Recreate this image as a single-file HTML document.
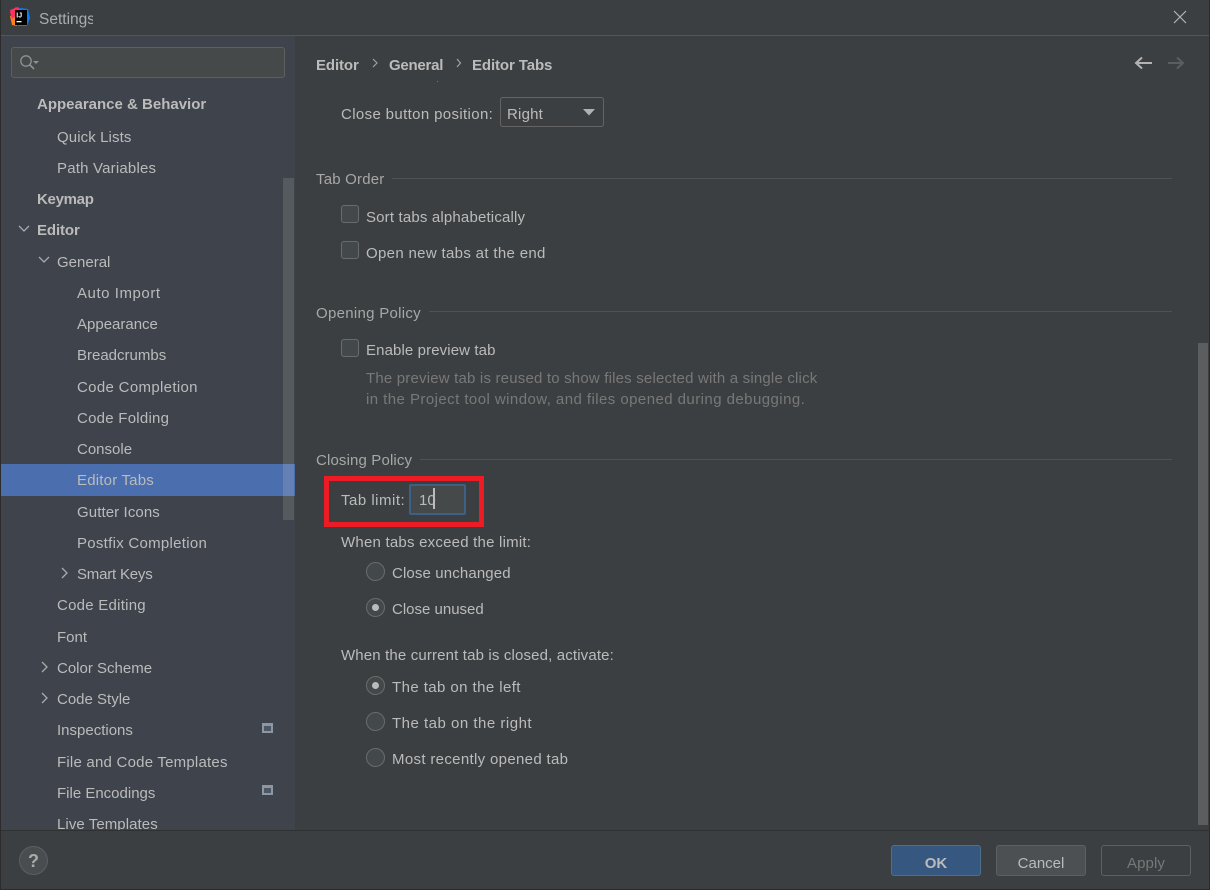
<!DOCTYPE html>
<html><head><meta charset="utf-8"><style>
html,body{margin:0;padding:0;width:1210px;height:890px;overflow:hidden;background:#3c3f41}
body{position:relative;font-family:"Liberation Sans",sans-serif;font-size:15px;color:#bbbbbb}
.t{position:absolute;white-space:nowrap;line-height:20px;height:20px;margin-top:1px}
.b{font-weight:bold}
.box{position:absolute;box-sizing:border-box}
.cb{position:absolute;box-sizing:border-box;width:18px;height:18px;left:341px;border:1px solid #6b6b6b;border-radius:3px;background:#43494a}
.rb{position:absolute;box-sizing:border-box;width:19px;height:19px;left:366px;border:1px solid #6b6b6b;border-radius:50%;background:#43494a}
.rb.on::after{content:"";position:absolute;left:5px;top:5px;width:7px;height:7px;border-radius:50%;background:#bbb}
.sep{position:absolute;height:1px;background:#515151;right:38px}
svg{position:absolute;overflow:visible}
</style></head><body>
<div class="box" style="left:0;top:0;width:1210px;height:890px;border:1px solid #2b2b2b;border-top:0;z-index:9;pointer-events:none"></div>
<div class="box" style="left:0;top:35px;width:1210px;height:1px;background:#555"></div>

<svg style="left:10px;top:7px" width="20" height="20" viewBox="0 0 20 20"><path d="M0 3L8 0L12 4L2 11Z" fill="#f5317f"/><path d="M0 9L6 7L7 19L2 18Z" fill="#fc801d"/><path d="M10 1L18 2L20 11L17 19L8 19Z" fill="#087cfa"/><path d="M0 5L6 0L9 6L2 12Z" fill="#fe315d"/><rect x="5" y="3" width="12" height="15" fill="#000"/><rect x="6.500" y="14" width="5" height="1.300" fill="#fff"/><text x="6.300" y="10.500" font-family="Liberation Sans" font-size="7" font-weight="bold" fill="#fff">IJ</text></svg>
<div class="t" style="left:39px;top:9px;width:54px;overflow:hidden;color:#a9adb0;font-size:15.5px">Settings</div>
<svg style="left:1173px;top:10px" width="14" height="14" viewBox="0 0 14 14"><path d="M1 1L13 13M13 1L1 13" stroke="#b5b5b5" stroke-width="1.2" fill="none"/></svg>

<div class="box" style="left:1px;top:36px;width:294px;height:794px;background:#3e434c;overflow:hidden">
 <div class="box" style="left:10px;top:11px;width:274px;height:31px;background:#45494a;border:1px solid #5e6060;border-radius:3px"></div>
 <svg style="left:18px;top:18px" width="22" height="18" viewBox="0 0 22 18"><circle cx="7" cy="7" r="5.2" fill="none" stroke="#8f9294" stroke-width="1.3"/><path d="M11 11L15 15" stroke="#8f9294" stroke-width="1.6"/><path d="M14 7H20L17 10Z" fill="#8f9294"/></svg>
 <div class="box" style="left:282px;top:142px;width:11px;height:342px;background:#555a5f"></div>
 <div class="box" style="left:0;top:428px;width:294px;height:32px;background:#4b6eaf"></div>
 <div class="box" style="left:282px;top:428px;width:11px;height:32px;background:#6580b5"></div>

 <div class="t b" style="left:36px;top:58px">Appearance &amp; Behavior</div>
 <div class="t" style="left:56px;top:91px;letter-spacing:.1px">Quick Lists</div>
 <div class="t" style="left:56px;top:122px;letter-spacing:.2px">Path Variables</div>
 <div class="t b" style="left:36px;top:153px;letter-spacing:-.3px">Keymap</div>
 <div class="t b" style="left:36px;top:184px;letter-spacing:-.1px">Editor</div>
 <div class="t" style="left:56px;top:216px">General</div>
 <div class="t" style="left:76px;top:247px;letter-spacing:.55px">Auto Import</div>
 <div class="t" style="left:76px;top:278px">Appearance</div>
 <div class="t" style="left:76px;top:309px">Breadcrumbs</div>
 <div class="t" style="left:76px;top:341px;letter-spacing:.33px">Code Completion</div>
 <div class="t" style="left:76px;top:372px;letter-spacing:.25px">Code Folding</div>
 <div class="t" style="left:76px;top:403px">Console</div>
 <div class="t" style="left:76px;top:434px;letter-spacing:.2px">Editor Tabs</div>
 <div class="t" style="left:76px;top:466px;letter-spacing:.1px">Gutter Icons</div>
 <div class="t" style="left:76px;top:497px;letter-spacing:.28px">Postfix Completion</div>
 <div class="t" style="left:76px;top:528px;letter-spacing:-.2px">Smart Keys</div>
 <div class="t" style="left:56px;top:559px;letter-spacing:.25px">Code Editing</div>
 <div class="t" style="left:56px;top:591px">Font</div>
 <div class="t" style="left:56px;top:622px">Color Scheme</div>
 <div class="t" style="left:56px;top:653px">Code Style</div>
 <div class="t" style="left:56px;top:684px">Inspections</div>
 <div class="t" style="left:56px;top:716px;letter-spacing:.22px">File and Code Templates</div>
 <div class="t" style="left:56px;top:747px">File Encodings</div>
 <div class="t" style="left:56px;top:778px;letter-spacing:.07px">Live Templates</div>

 <svg style="left:0;top:0" width="294" height="794" viewBox="0 0 294 794" fill="none" stroke="#a8abad" stroke-width="1.3">
  <path d="M18 190L23 195L28 190"/><path d="M38 221L43 226L48 221"/>
  <path d="M61 532L66 537L61 542"/><path d="M41 626L46 631L41 636"/><path d="M41 657L46 662L41 667"/>
  <g stroke="none"><rect x="261" y="687" width="11" height="10" fill="#8d97a3"/><rect x="263" y="690" width="7" height="5" fill="#4d5763"/><rect x="261" y="749" width="11" height="10" fill="#8d97a3"/><rect x="263" y="752" width="7" height="5" fill="#4d5763"/></g>
 </svg>
</div>

<div class="t b" style="left:316px;top:55px;letter-spacing:-.1px">Editor</div>
<div class="t b" style="left:389px;top:55px;letter-spacing:-.25px">General</div>
<div class="t b" style="left:472px;top:55px;letter-spacing:-.1px">Editor Tabs</div>
<svg style="left:370px;top:58px" width="100" height="12" viewBox="0 0 100 12" fill="none" stroke="#a0a0a0" stroke-width="1.2"><path d="M3 1L7 5L3 9"/><path d="M87 1L90.500 5L87 9"/></svg>
<svg style="left:1133px;top:55px" width="60" height="16" viewBox="0 0 60 16" fill="none" stroke-width="2"><path d="M19 8H3M9 2.500L3 8L9 13.500" stroke="#b3b3b3"/><path d="M35 8H50M44 2.500L50 8L44 13.500" stroke="#5b5e60"/></svg>
<div class="box" style="left:437px;top:81px;width:1px;height:1px;background:#777"></div>

<div class="t" style="left:341px;top:104px;letter-spacing:.36px">Close button position:</div>
<div class="box" style="left:500px;top:97px;width:104px;height:30px;border:1px solid #646464;border-radius:3px;background:#3c3f41"></div>
<div class="t" style="left:507px;top:104px;letter-spacing:.2px">Right</div>
<svg style="left:583px;top:109px" width="12" height="7"><path d="M0 0H12L6 6.500Z" fill="#afb1b3"/></svg>

<div class="t" style="left:316px;top:169px;color:#a7a7a7;letter-spacing:.2px">Tab Order</div>
<div class="sep" style="left:392px;top:178px"></div>
<div class="cb" style="top:205px"></div>
<div class="t" style="left:366px;top:207px;letter-spacing:.17px">Sort tabs alphabetically</div>
<div class="cb" style="top:241px"></div>
<div class="t" style="left:366px;top:243px;letter-spacing:.33px">Open new tabs at the end</div>

<div class="t" style="left:316px;top:303px;color:#a7a7a7;letter-spacing:.29px">Opening Policy</div>
<div class="sep" style="left:429px;top:311px"></div>
<div class="cb" style="top:339px"></div>
<div class="t" style="left:366px;top:340px;letter-spacing:.11px">Enable preview tab</div>
<div class="t" style="left:366px;top:368px;color:#787878;letter-spacing:.19px">The preview tab is reused to show files selected with a single click</div>
<div class="t" style="left:366px;top:389px;color:#787878;letter-spacing:.44px">in the Project tool window, and files opened during debugging.</div>

<div class="t" style="left:316px;top:450px;color:#a7a7a7;letter-spacing:.14px">Closing Policy</div>
<div class="sep" style="left:420px;top:459px"></div>
<div class="box" style="left:324px;top:476px;width:160px;height:51px;border:5px solid #ed1c24"></div>
<div class="t" style="left:341px;top:490px;letter-spacing:.5px">Tab limit:</div>
<div class="box" style="left:409px;top:484px;width:57px;height:31px;background:#45494a;border:2px solid #3d6185;border-radius:2px"></div>
<div class="t" style="left:419px;top:490px">10</div>
<div class="box" style="left:433px;top:488px;width:2px;height:21px;background:#bbb"></div>

<div class="t" style="left:341px;top:532px;letter-spacing:.22px">When tabs exceed the limit:</div>
<div class="rb" style="top:562px"></div>
<div class="t" style="left:392px;top:563px;letter-spacing:.13px">Close unchanged</div>
<div class="rb on" style="top:598px"></div>
<div class="t" style="left:392px;top:599px">Close unused</div>
<div class="t" style="left:341px;top:645px;letter-spacing:.15px">When the current tab is closed, activate:</div>
<div class="rb on" style="top:676px"></div>
<div class="t" style="left:392px;top:677px;letter-spacing:.42px">The tab on the left</div>
<div class="rb" style="top:712px"></div>
<div class="t" style="left:392px;top:713px;letter-spacing:.5px">The tab on the right</div>
<div class="rb" style="top:748px"></div>
<div class="t" style="left:392px;top:749px;letter-spacing:.33px">Most recently opened tab</div>

<div class="box" style="left:1198px;top:343px;width:10px;height:482px;background:#5b5d5f"></div>
<div class="box" style="left:0;top:830px;width:1210px;height:1px;background:#2f3132"></div>

<div class="box" style="left:19px;top:846px;width:29px;height:29px;border-radius:50%;background:#4a4d4f;border:1px solid #5c5f61"></div>
<div class="t b" style="left:19px;top:850px;width:29px;text-align:center;font-size:18px;color:#aaa">?</div>

<div class="box" style="left:891px;top:845px;width:90px;height:31px;background:#365880;border:1px solid #4c708c;border-radius:3px"></div>
<div class="t b" style="left:891px;top:853px;width:90px;text-align:center">OK</div>
<div class="box" style="left:996px;top:845px;width:90px;height:31px;background:#4c5052;border:1px solid #5e6060;border-radius:3px"></div>
<div class="t" style="left:996px;top:853px;width:90px;text-align:center">Cancel</div>
<div class="box" style="left:1101px;top:845px;width:90px;height:31px;border:1px solid #5e6060;border-radius:3px"></div>
<div class="t" style="left:1101px;top:853px;width:90px;text-align:center;color:#777;letter-spacing:.1px">Apply</div>
</body></html>
